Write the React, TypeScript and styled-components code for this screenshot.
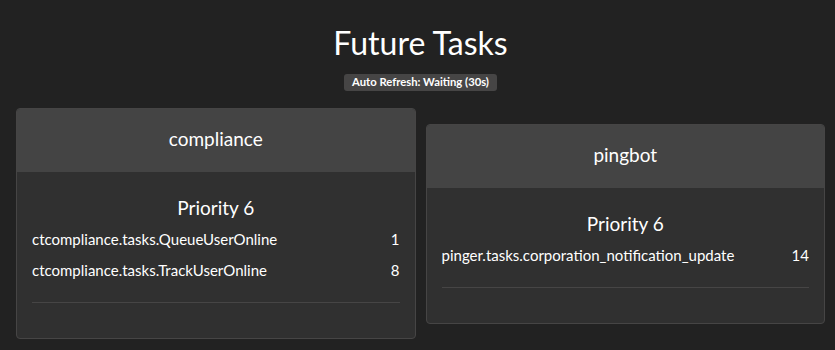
import React from 'react';
import styled, { createGlobalStyle } from 'styled-components';

const GlobalStyle = createGlobalStyle`
    body {
        margin: 0;
        background: #222222;
        color: #ffffff;
        font-family: Lato, "Open Sans", sans-serif;
        font-size: 15px;
        line-height: 1.428571;
    }
`;

const Page = styled.div`
    padding: 25px 10px 0 16px;
`;

const Header = styled.header`
    display: flex;
    flex-direction: column;
    align-items: center;
`;

const Title = styled.h1`
    margin: 0;
    font-size: 32px;
    font-weight: 400;
    line-height: 1.1;
`;

const Badge = styled.span`
    margin-top: 14px;
    display: inline-block;
    padding: 2px 8px 4px;
    font-size: 11.25px;
    font-weight: 700;
    line-height: 1;
    color: #fff;
    background: #464545;
    border-radius: 3px;
`;

const Queues = styled.div`
    margin-top: 17px;
    display: flex;
    align-items: center;
    gap: 10px;
`;

const Panel = styled.section`
    flex: 1;
    background: #303030;
    border: 1px solid #464545;
    border-radius: 4px;
    overflow: hidden;
`;

const PanelHeading = styled.div`
    box-sizing: border-box;
    height: 63px;
    padding-bottom: 4px;
    display: flex;
    align-items: center;
    justify-content: center;
    background: #444444;
    font-size: 19px;
`;

const PanelBody = styled.div`
    padding: 15px;
`;

const Priority = styled.h4`
    margin: 10px 0 11px;
    font-size: 19px;
    font-weight: 400;
    line-height: 21px;
    text-align: center;
`;

const TaskRow = styled.p`
    margin: 0 0 10px;
    display: flex;
    justify-content: space-between;
    line-height: 21px;
`;

const Divider = styled.hr`
    margin: 21px 0 20px;
    border: 0;
    border-top: 1px solid #464545;
`;

type Task = { name: string; count: number };
type Queue = { name: string; priority: number; tasks: Task[] };

const queues: Queue[] = [
    {
        name: 'compliance',
        priority: 6,
        tasks: [
            { name: 'ctcompliance.tasks.QueueUserOnline', count: 1 },
            { name: 'ctcompliance.tasks.TrackUserOnline', count: 8 },
        ],
    },
    {
        name: 'pingbot',
        priority: 6,
        tasks: [{ name: 'pinger.tasks.corporation_notification_update', count: 14 }],
    },
];

const App = () => (
    <Page>
        <GlobalStyle />
        <Header>
            <Title>Future Tasks</Title>
            <Badge>Auto Refresh: Waiting (30s)</Badge>
        </Header>
        <Queues>
            {queues.map(q => (
                <Panel key={q.name}>
                    <PanelHeading>{q.name}</PanelHeading>
                    <PanelBody>
                        <Priority>Priority {q.priority}</Priority>
                        {q.tasks.map(t => (
                            <TaskRow key={t.name}>
                                <span>{t.name}</span>
                                <span>{t.count}</span>
                            </TaskRow>
                        ))}
                        <Divider />
                    </PanelBody>
                </Panel>
            ))}
        </Queues>
    </Page>
);

export default App;
